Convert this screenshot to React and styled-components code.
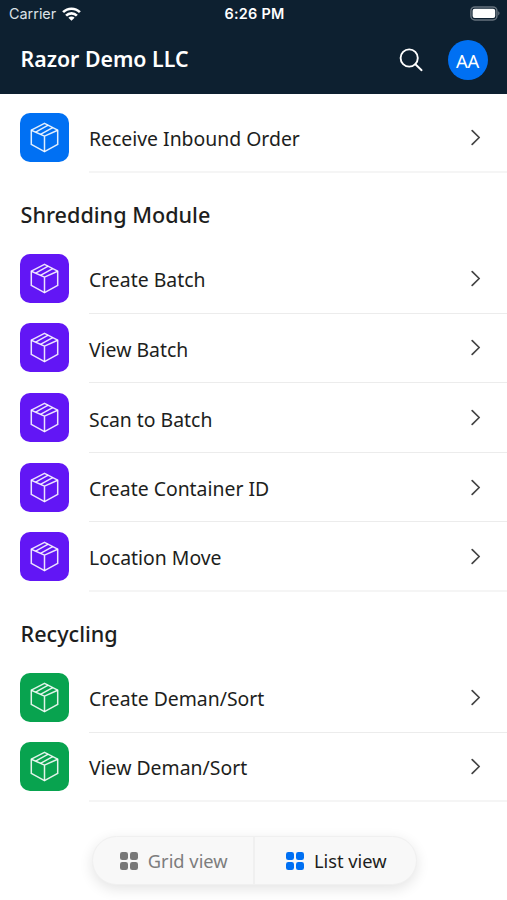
import React, { useState } from 'react';
import styled, { createGlobalStyle } from 'styled-components';

const GlobalStyle = createGlobalStyle`
  * {
    box-sizing: border-box;
  }

  body {
    margin: 0;
    background-color: rgb(255, 255, 255);
    font-family: 'Noto Sans', sans-serif;
    color: rgb(29, 30, 32);
  }

  button {
    padding: 0;
    border: none;
    background: none;
    font: inherit;
    color: inherit;
    cursor: pointer;
  }
`;

const Screen = styled.div`
  position: relative;
  height: 900px;
  width: 507px;
  overflow: hidden;
`;

const Header = styled.header`
  height: 93.5px;
  background-color: rgb(13, 32, 48);
  color: rgb(255, 255, 255);
`;

const StatusBar = styled.div`
  display: grid;
  grid-template-columns: 1fr auto 1fr;
  align-items: center;
  height: 27px;
  padding: 0 7px 0 9px;
  font-family: Inter, sans-serif;
  font-size: 14.4px;
`;

const Carrier = styled.div`
  display: flex;
  align-items: center;
  gap: 6px;
  color: rgb(220, 226, 231);
`;

const Clock = styled.div`
  font-size: 14.4px;
  font-weight: 600;
  letter-spacing: 0.3px;
`;

const BatteryIcon = styled.svg`
  justify-self: end;
`;

const TitleBar = styled.div`
  display: flex;
  align-items: center;
  height: 65px;
  padding: 0 19px 0 20.5px;
`;

const Title = styled.h1`
  flex: 1;
  margin: 0;
  padding-bottom: 2px;
  font-size: 21.3px;
  font-weight: 600;
  line-height: 30px;
`;

const SearchButton = styled.button`
  display: flex;
  margin-right: 25px;
`;

const Avatar = styled.div`
  display: flex;
  height: 40px;
  width: 40px;
  padding: 2px 1px 0 0;
  justify-content: center;
  align-items: center;
  background-color: rgb(0, 112, 243);
  border-radius: 50%;
  font-size: 18.4px;
  letter-spacing: -0.3px;
`;

const Content = styled.main`
  padding-top: 10px;
`;

const SectionTitle = styled.h2`
  display: flex;
  align-items: center;
  height: 71px;
  margin: 0;
  padding: 12px 0 0 20.5px;
  font-size: 21.6px;
  font-weight: 500;
`;

const Row = styled.div`
  display: flex;
  align-items: center;
  height: 69.6px;
  padding-left: 20.4px;
  cursor: pointer;
`;

const Tile = styled.div`
  display: flex;
  height: 49px;
  width: 49px;
  margin: 0 19.6px 1px 0;
  justify-content: center;
  align-items: center;
  background-color: ${({ color }) => color};
  border-radius: 10px;
`;

const RowBody = styled.div`
  display: flex;
  flex: 1;
  height: 100%;
  padding: 3px 26px 0 0;
  justify-content: space-between;
  align-items: center;
  border-bottom: ${({ last }) => (last ? '2px solid rgb(245, 245, 245)' : '1px solid rgb(236, 236, 236)')};
  font-size: 19.4px;

  svg {
    margin-bottom: 3px;
  }
`;

const ViewSwitch = styled.div`
  position: absolute;
  top: 836px;
  left: 91.5px;
  display: flex;
  height: 49px;
  width: 325px;
  background-color: rgb(248, 248, 248);
  border: 1px solid rgb(240, 240, 240);
  border-radius: 25px;
  box-shadow: 0 4px 14px rgba(0, 0, 0, .11);
`;

const ViewButton = styled.button`
  display: flex;
  flex: 1;
  justify-content: center;
  align-items: center;
  gap: 10px;
  padding-left: 2px;
  font-size: 18.3px;
  color: ${({ active }) => (active ? 'rgb(29, 30, 32)' : 'rgb(125, 125, 125)')};

  & + & {
    border-left: 2px solid rgb(240, 240, 240);
  }

  svg {
    fill: ${({ active }) => (active ? 'rgb(0, 112, 243)' : 'rgb(120, 120, 120)')};
  }
`;

const WifiIcon = () => (
  <svg width="19" height="14" viewBox="0 0 19 14" fill="none" stroke="#fff" strokeWidth="2.6">
    <path d="M1.1 5.2a11.8 11.8 0 0 1 16.8 0" />
    <path d="M4.1 8.6a7.6 7.6 0 0 1 10.8 0" />
    <path d="M9.5 13.8 6.4 10.7a4.4 4.4 0 0 1 6.2 0z" fill="#fff" stroke="none" />
  </svg>
);

const Battery = () => (
  <BatteryIcon width="30" height="15" viewBox="0 0 30 15" fill="none">
    <rect x="0.9" y="0.9" width="26" height="13" rx="4" stroke="#66727d" strokeWidth="1.5" />
    <rect x="2.6" y="2.7" width="22.6" height="9.4" rx="2" fill="#fff" />
    <path d="M28.2 5.3c1.8.7 1.8 3.5 0 4.2z" fill="#66727d" />
  </BatteryIcon>
);

const SearchIcon = () => (
  <svg width="24" height="24" viewBox="0 0 24 24" fill="none" stroke="#fff" strokeWidth="1.9" strokeLinecap="round">
    <circle cx="10.2" cy="10" r="8.6" />
    <path d="m16.4 16.2 6.2 6" />
  </svg>
);

const BoxIcon = () => (
  <svg width="29" height="31" viewBox="0 0 29 31" fill="none" stroke="#fff" strokeOpacity=".88" strokeWidth="1.5" strokeLinejoin="round">
    <path d="M14.5 1.3 27.7 8.2v14.2L14.5 29.7 1.3 22.4V8.2z" />
    <path d="M1.3 8.2l13.2 5.9 13.2-5.9M14.5 14.1v15.6" />
    <path d="m5.6 10.1 12.6-6.9M10.5 12.3l12.2-6.7" />
  </svg>
);

const ChevronIcon = () => (
  <svg width="10" height="17" viewBox="0 0 10 17" fill="none" stroke="#444" strokeWidth="1.7" strokeLinecap="round" strokeLinejoin="round">
    <path d="m1.2 1.6 7 6.9-7 6.9" />
  </svg>
);

const GridIcon = () => (
  <svg width="18" height="18" viewBox="0 0 18 18">
    <rect width="8" height="8" rx="2.3" />
    <rect x="10" width="8" height="8" rx="2.3" />
    <rect y="10" width="8" height="8" rx="2.3" />
    <rect x="10" y="10" width="8" height="8" rx="2.3" />
  </svg>
);

const sections = [
  {
    color: 'rgb(0, 112, 243)',
    items: ['Receive Inbound Order']
  },
  {
    title: 'Shredding Module',
    color: 'rgb(98, 22, 245)',
    items: ['Create Batch', 'View Batch', 'Scan to Batch', 'Create Container ID', 'Location Move']
  },
  {
    title: 'Recycling',
    color: 'rgb(8, 163, 79)',
    items: ['Create Deman/Sort', 'View Deman/Sort']
  }
];

const views = ['Grid view', 'List view'];

const Section = ({ title, color, items }) => (
  <section>
    {title && <SectionTitle>{title}</SectionTitle>}
    {items.map((item, index) => (
      <Row key={item}>
        <Tile color={color}>
          <BoxIcon />
        </Tile>
        <RowBody last={index === items.length - 1 ? 1 : 0}>
          <span>{item}</span>
          <ChevronIcon />
        </RowBody>
      </Row>
    ))}
  </section>
);

const App = () => {
  const [view, setView] = useState('List view');

  return (
    <Screen>
      <GlobalStyle />
      <Header>
        <StatusBar>
          <Carrier>
            Carrier
            <WifiIcon />
          </Carrier>
          <Clock>6:26 PM</Clock>
          <Battery />
        </StatusBar>
        <TitleBar>
          <Title>Razor Demo LLC</Title>
          <SearchButton aria-label="Search">
            <SearchIcon />
          </SearchButton>
          <Avatar>AA</Avatar>
        </TitleBar>
      </Header>
      <Content>
        {sections.map(section => (
          <Section key={section.color} {...section} />
        ))}
      </Content>
      <ViewSwitch>
        {views.map(name => (
          <ViewButton key={name} active={view === name ? 1 : 0} onClick={() => setView(name)}>
            <GridIcon />
            {name}
          </ViewButton>
        ))}
      </ViewSwitch>
    </Screen>
  );
};

export default App;
